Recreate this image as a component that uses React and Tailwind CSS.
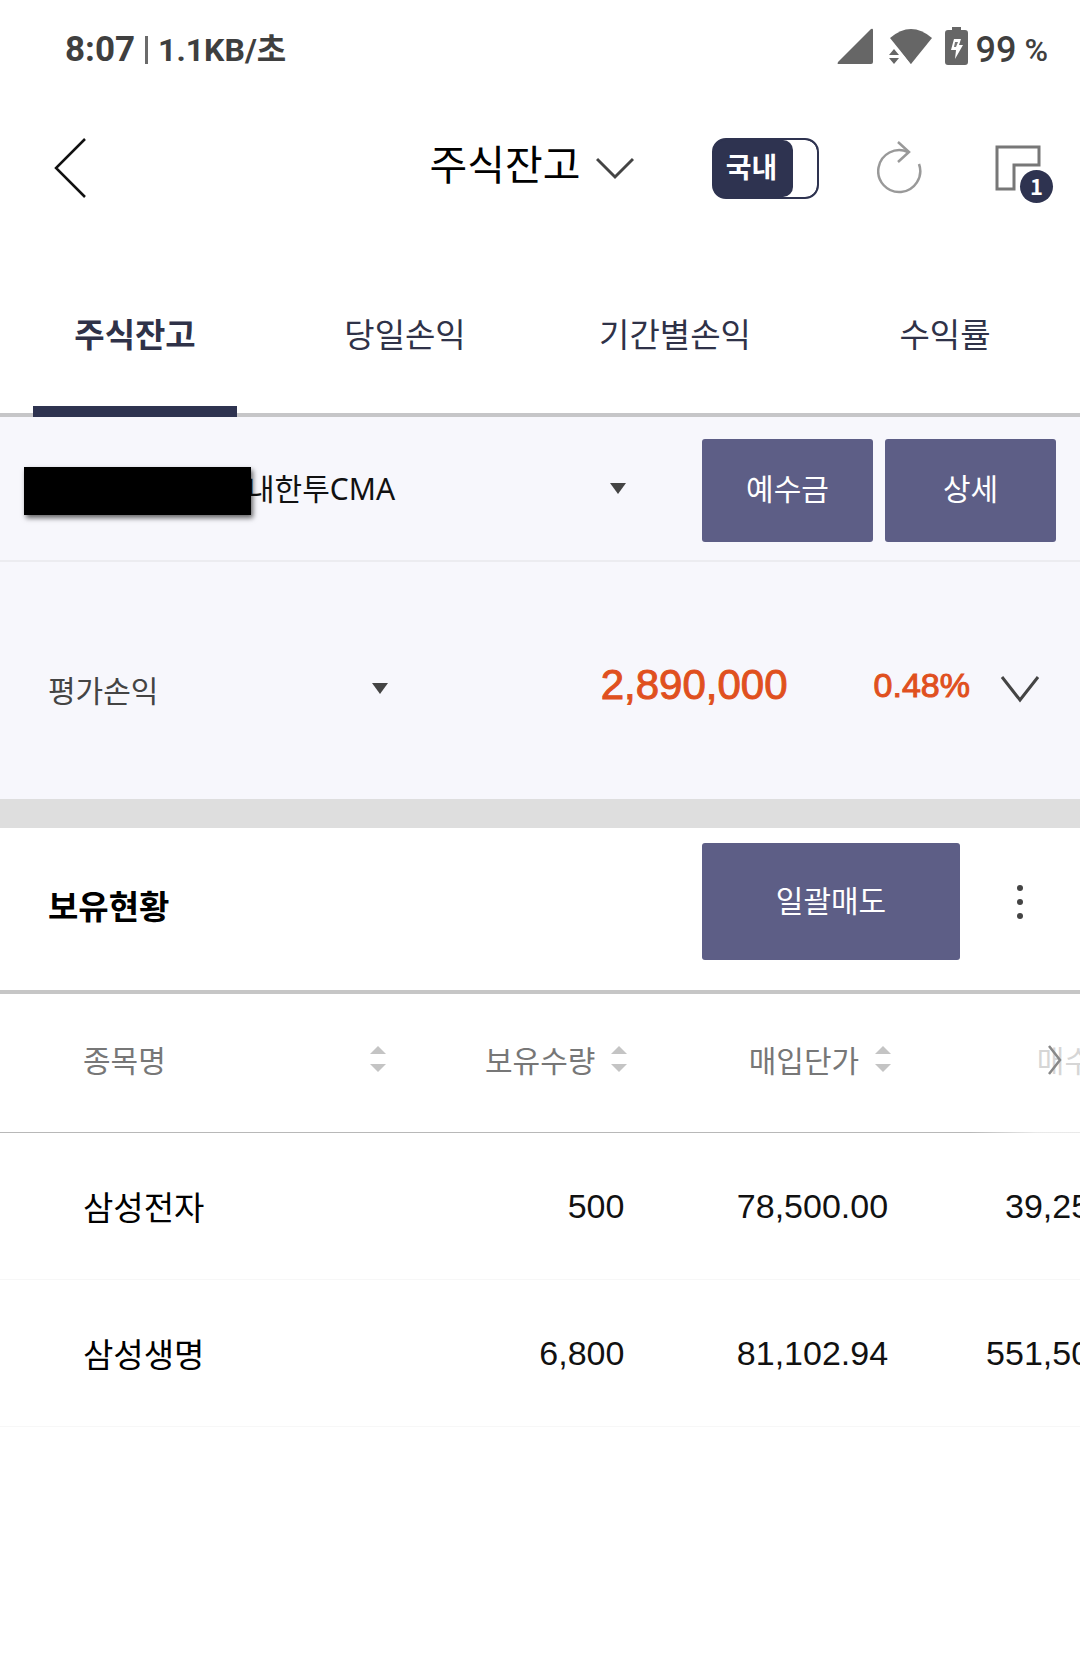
import React from "react";

const TABS = ["주식잔고", "당일손익", "기간별손익", "수익률"];

const HOLDINGS = [
  { name: "삼성전자", quantity: "500", price: "78,500.00", amount: "39,250,000" },
  { name: "삼성생명", quantity: "6,800", price: "81,102.94", amount: "551,500,000" },
];

function StatusBar() {
  return (
    <div className="flex h-[96px] items-center justify-between pl-[65px] pr-8 font-[Roboto,'Noto_Sans_CJK_KR',sans-serif] text-[#3f3f3f]">
      <div className="flex items-center gap-[10px] pt-1 font-bold leading-10">
        <span className="text-[35px]">8:07</span>
        <span className="h-7 w-[3px] bg-[#6b6b6b]" />
        <span className="text-[32px]">1.1KB/초</span>
      </div>
      <div className="flex items-center font-medium">
        <svg className="mr-4 mb-1 h-9 w-9" viewBox="0 0 36 36" fill="#666">
          <path d="M34 1Q36 0 36 2V34Q36 36 34 36H1Q0 36 1 34Z" />
        </svg>
        <svg className="mr-3 mb-1 h-9 w-11" viewBox="0 0 44 36" fill="#666">
          <path d="M1 10Q22 -8 43 10L22 36Z" />
          <path d="M-1 19L4 17L11 25L14 36H-1Z" fill="#fff" />
          <path d="M12 23L22 36L24 20L12 20Z" />
          <path d="M0 27L5 21L10 27ZM0 30H10L5 36Z" />
        </svg>
        <svg className="mr-2 mb-1 h-[38px] w-[23px]" viewBox="0 0 23 38">
          <path d="M7 0H16V3H20Q23 3 23 6V35Q23 38 20 38H3Q0 38 0 35V6Q0 3 3 3H7Z" fill="#666" />
          <path d="M9 12H16L14 18H18L10 32L11 23H6Z" fill="#fff" />
          <path d="M10 15H13L11 20H9Z" fill="#777" />
        </svg>
        <span className="pt-1 text-[36px] leading-10">99</span>
        <span className="ml-2 pt-1 text-[32px] leading-10">%</span>
      </div>
    </div>
  );
}

function Header() {
  return (
    <header className="grid h-[144px] grid-cols-[1fr_auto_1fr] items-center px-[27px]">
      <button type="button" aria-label="뒤로" className="ml-[27px] justify-self-start">
        <svg className="h-[60px] w-8" viewBox="0 0 32 60" fill="none" stroke="#111" strokeWidth="2.5">
          <path d="M31 1L2 30L31 59" />
        </svg>
      </button>
      <button type="button" className="flex items-center gap-4 pr-4">
        <span className="mb-3 text-[41px] leading-[48px] text-black">주식잔고</span>
        <svg className="h-6 w-[38px]" viewBox="0 0 38 24" fill="none" stroke="#444" strokeWidth="3">
          <path d="M1 3L19 21L37 3" />
        </svg>
      </button>
      <div className="flex items-center justify-end">
        <button
          type="button"
          role="switch"
          aria-checked="true"
          className="mr-[58px] flex h-[61px] w-[107px] overflow-hidden rounded-[14px] border-2 border-[#2e3350] bg-[#2e3350]"
        >
          <span className="flex h-full w-full rounded-[12px] bg-linear-to-r from-[#2e3350] from-50% to-white to-50%">
            <span className="flex h-full w-[79px] items-center justify-center rounded-r-[10px] bg-[#2e3350] pb-1 pr-1 text-[28px] font-bold leading-10 text-white">
              국내
            </span>
          </span>
        </button>
        <button type="button" aria-label="새로고침" className="mr-[72px]">
          <svg className="h-[54px] w-[46px]" viewBox="0 -2 46 54" fill="none" stroke="#999" strokeWidth="2.5">
            <path d="M42 21A21 21 0 1 1 31 9" />
            <path d="M21 -1L32 9L21 19" />
          </svg>
        </button>
        <button type="button" aria-label="창 목록" className="relative h-[60px] w-[58px]">
          <svg className="h-[46px] w-[46px]" viewBox="0 0 46 46" fill="none" stroke="#777" strokeWidth="3">
            <path d="M2 2H44V20H19V44H2Z" />
          </svg>
          <span className="absolute -bottom-[5px] right-0 flex h-[33px] w-[33px] items-center justify-center rounded-full bg-[#2e3350] pb-1 text-[22px] font-bold leading-6 text-white">
            1
          </span>
        </button>
      </div>
    </header>
  );
}

function Tabs() {
  return (
    <nav role="tablist" className="grid h-[177px] grid-cols-4 border-b-4 border-[#c6c6c8] text-[33px] leading-10 text-[#2f3248]">
      {TABS.map((tab, i) => (
        <button
          key={tab}
          type="button"
          role="tab"
          aria-selected={i === 0}
          className="relative pb-3 pt-6 aria-selected:font-bold"
        >
          {tab}
          {i === 0 && <span className="absolute inset-x-[33px] -bottom-1 h-[11px] bg-[#2e3350]" />}
        </button>
      ))}
    </nav>
  );
}

function Caret() {
  return (
    <svg className="pointer-events-none absolute right-0 h-[11px] w-4" viewBox="0 0 16 11" fill="#444">
      <path d="M0 0H16L8 11Z" />
    </svg>
  );
}

function SortArrows() {
  return (
    <svg className="h-7 w-4 shrink-0" viewBox="0 0 16 28" fill="#c4c4c4">
      <path d="M0 9L8 1L16 9ZM0 19H16L8 27Z" />
    </svg>
  );
}

function AccountBar() {
  return (
    <section className="flex h-[145px] items-center border-b-2 border-[#ececf0] bg-[#f7f7fc] px-6 pt-1">
      <span className="relative z-10 h-12 w-[227px] shrink-0 bg-black shadow-[2px_3px_5px_rgba(0,0,0,0.6)]" />
      <div className="relative -ml-1 mb-1 mr-[76px] flex flex-1 items-center">
        <select
          aria-label="계좌"
          className="w-full appearance-none bg-transparent font-['Noto_Sans','Noto_Sans_CJK_KR',sans-serif] text-[30px] leading-10 text-[#111]"
        >
          <option>내한투CMA</option>
        </select>
        <Caret />
      </div>
      <div className="flex gap-3 text-[30px] leading-10 text-white">
        <button type="button" className="h-[103px] w-[171px] rounded-[3px] bg-[#5d5e86] pb-2">예수금</button>
        <button type="button" className="h-[103px] w-[171px] rounded-[3px] bg-[#5d5e86] pb-2">상세</button>
      </div>
    </section>
  );
}

function ProfitSummary() {
  return (
    <section className="flex h-[266px] items-center border-b-[29px] border-[#dedede] bg-[#f7f7fc] pl-12 pr-10 pt-4">
      <div className="relative flex w-[340px] items-center">
        <select
          aria-label="손익 구분"
          className="w-full appearance-none bg-transparent text-[30px] leading-10 text-[#444]"
        >
          <option>평가손익</option>
        </select>
        <Caret />
      </div>
      <div className="flex flex-1 items-center justify-end font-['Liberation_Sans',sans-serif] leading-10 text-[#e0501e]">
        <span className="mb-2 text-[42px] [-webkit-text-stroke:1px]">2,890,000</span>
        <span className="mb-2 ml-[86px] text-[34px] [-webkit-text-stroke:1px]">0.48%</span>
        <button type="button" aria-label="펼치기" className="ml-[30px]">
          <svg className="h-7 w-10" viewBox="0 0 40 28" fill="none" stroke="#444" strokeWidth="3">
            <path d="M2 2L20 25L38 2" />
          </svg>
        </button>
      </div>
    </section>
  );
}

function HoldingsHeader() {
  return (
    <section className="flex h-[166px] items-center border-b-4 border-[#c6c6c6] pl-12 pr-[50px]">
      <h2 className="mb-2 flex-1 text-[33px] font-bold leading-10 text-black">보유현황</h2>
      <button type="button" className="mb-4 h-[117px] w-[258px] rounded-[3px] bg-[#5d5e86] pb-1 text-[30px] leading-10 text-white">
        일괄매도
      </button>
      <button type="button" aria-label="더보기" className="mb-4 ml-[50px]">
        <svg className="h-9 w-5" viewBox="0 0 20 36" fill="#444">
          <circle cx="10" cy="5" r="3" />
          <circle cx="10" cy="19" r="3" />
          <circle cx="10" cy="33" r="3" />
        </svg>
      </button>
    </section>
  );
}

function HoldingsTable() {
  return (
    <section className="relative overflow-hidden">
      <table className="w-[109%] table-fixed">
        <thead className="text-[30px] leading-10 text-[#777]">
          <tr className="h-[138px] border-b border-[#b8b8b8]">
            <th className="w-[32.8%] pb-2 pl-[83px] font-normal">
              <button type="button" className="flex w-full items-center justify-between">
                종목명
                <SortArrows />
              </button>
            </th>
            <th className="w-[20.5%] pb-2 font-normal">
              <button type="button" className="ml-auto flex items-center gap-4">
                보유수량
                <SortArrows />
              </button>
            </th>
            <th className="w-[22.4%] pb-2 font-normal">
              <button type="button" className="ml-auto flex items-center gap-4">
                매입단가
                <SortArrows />
              </button>
            </th>
            <th className="pb-2 font-normal">
              <button type="button" className="ml-auto flex items-center gap-[14px]">
                매수금액
                <SortArrows />
              </button>
            </th>
          </tr>
        </thead>
        <tbody className="text-right font-['Liberation_Sans',sans-serif] text-[34px] leading-10 text-[#111]">
          {HOLDINGS.map((row) => (
            <tr key={row.name} className="h-[147px] border-b border-[#f7f7f7]">
              <th className="pl-[83px] text-left font-['Noto_Sans_CJK_KR',sans-serif] text-[33px] font-normal text-black">{row.name}</th>
              <td className="pr-[3px]">{row.quantity}</td>
              <td className="pr-[3px]">{row.price}</td>
              <td className="pr-[2px]">{row.amount}</td>
            </tr>
          ))}
        </tbody>
      </table>
      <button
        type="button"
        aria-label="다음 열"
        className="absolute right-0 top-0 flex h-[139px] w-[110px] items-center justify-end bg-linear-to-r from-white/0 to-white/70 to-60% pb-2 pr-[18px]"
      >
        <svg className="h-[30px] w-[14px]" viewBox="0 0 14 30" fill="none" stroke="#888" strokeWidth="2.5">
          <path d="M1 1L12 15L1 29" />
        </svg>
      </button>
    </section>
  );
}

export default function App() {
  return (
    <main className="min-h-screen bg-white font-['Noto_Sans_CJK_KR',sans-serif]">
      <StatusBar />
      <Header />
      <Tabs />
      <AccountBar />
      <ProfitSummary />
      <HoldingsHeader />
      <HoldingsTable />
    </main>
  );
}
